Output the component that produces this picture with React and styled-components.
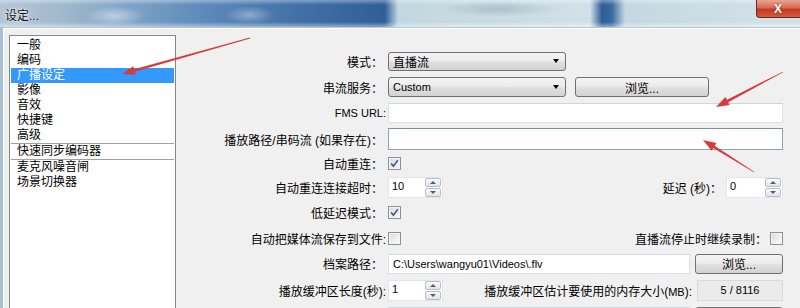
import React from "react";
import styled, { createGlobalStyle } from "styled-components";

const GlobalStyle = createGlobalStyle`
  html, body { margin: 0; padding: 0; background: #f0f0f0; }
  body {
    font-family: "Liberation Sans", "Noto Sans CJK SC", sans-serif;
    font-size: 12px;
    color: #000;
  }
  * { box-sizing: border-box; }
`;

const Window = styled.div`
  position: relative;
  width: 800px;
  height: 308px;
  overflow: hidden;
  display: flex;
  flex-direction: column;
  background: #f0f0f0;
`;

const TitleBar = styled.div`
  height: 27px;
  flex: none;
  display: flex;
  align-items: flex-start;
  background:
    radial-gradient(ellipse 30px 10px at 115px 16px, rgba(255,255,255,0.45), rgba(255,255,255,0)),
    radial-gradient(ellipse 25px 9px at 250px 15px, rgba(255,255,255,0.35), rgba(255,255,255,0)),
    radial-gradient(ellipse 60px 8px at 500px 9px, rgba(120,140,160,0.35), rgba(120,140,160,0)),
    linear-gradient(180deg, rgba(255,255,255,0.35) 0px, rgba(255,255,255,0) 5px, rgba(255,255,255,0) 22px, rgba(255,255,255,0.45) 27px),
    linear-gradient(90deg, #b3c6d6 0px, #a1b9ce 60px, #7ea3c6 130px, #5e8bbb 200px, #426fa6 300px, #2f5f98 385px, #c2d7df 398px, #d0e1e7 590px, #2f5c95 602px, #3a6aa0 612px, #c4d8e1 625px, #cfe0e7 757px);
`;

const TitleText = styled.div`
  padding: 6px 0 0 5px;
  font-size: 12px;
  color: #111;
  text-shadow: 0 0 5px rgba(255,255,255,0.9), 0 0 2px rgba(255,255,255,0.9);
`;

const CloseButton = styled.div`
  margin-left: auto;
  margin-right: -4px;
  width: 48px;
  height: 18px;
  border: 1px solid #6a2a1f;
  border-top: none;
  border-radius: 0 0 4px 4px;
  background: linear-gradient(180deg, #e7a597 0%, #d86a55 45%, #c43a20 55%, #d25a3c 100%);
  color: #fff;
  font-weight: bold;
  font-size: 12px;
  display: flex;
  align-items: center;
  justify-content: center;
  padding-right: 4px;
  text-shadow: 0 0 2px #6a2a1f;
`;

const Body = styled.div`
  flex: 1;
  display: flex;
  align-items: flex-start;
  border-left: 3px solid #a9bfd2;
  border-top: 1px solid #b9c6d2;
  box-shadow: inset 1px 1px 0 #ffffff;
`;

const ListPanel = styled.div`
  flex: none;
  margin: 7px 0 0 6px;
  width: 167px;
  height: 300px;
  background: #fff;
  border: 1px solid #828790;
  padding: 2px 1px;
`;

const ListItem = styled.div`
  height: 15px;
  line-height: 15px;
  padding-left: 6px;
  white-space: nowrap;
  background: ${p => (p.$selected ? "#3399ff" : "transparent")};
  color: ${p => (p.$selected ? "#fff" : "#000")};
`;

const ListSep = styled.div`
  height: 1px;
  background: #a0a0a0;
`;

const Form = styled.div`
  flex: 1;
  display: grid;
  grid-template-columns: 1fr 395px;
  grid-template-rows: 26px 26px 26px 26px 23px 25px 25px 26px 25px 28px 26px;
  column-gap: 5px;
  align-items: center;
  padding: 20px 17px 0 0;
`;

const Label = styled.div`
  justify-self: end;
  white-space: nowrap;
  margin-right: ${p => (p.$tight ? "-3px" : "0")};
`;

const Controls = styled.div`
  display: flex;
  align-items: center;
  min-width: 0;
`;

const Spacer = styled.div`
  flex: 1;
`;

const InlineLabel = styled.div`
  white-space: nowrap;
  margin-right: ${p => p.$gap ?? 6}px;
`;

const Latin = styled.span`
  font-size: 11px;
  font-family: "Liberation Sans", sans-serif;
`;

const winGradient = `linear-gradient(180deg, #f4f4f4 0%, #ececec 45%, #dfdfdf 55%, #d3d3d3 100%)`;

const Select = styled.div`
  width: 178px;
  height: ${p => p.$h}px;
  border: 1px solid #707070;
  border-radius: 3px;
  background: ${winGradient};
  display: flex;
  align-items: center;
  padding: 0 6px 0 4px;
  white-space: nowrap;
`;

const Caret = styled.div`
  margin-left: auto;
  width: 0;
  height: 0;
  border-left: 3.5px solid transparent;
  border-right: 3.5px solid transparent;
  border-top: 4px solid #000;
`;

const Button = styled.div`
  flex: none;
  width: ${p => p.$w}px;
  height: 20px;
  margin-left: ${p => p.$ml}px;
  border: 1px solid #707070;
  border-radius: 3px;
  background: ${winGradient};
  display: flex;
  align-items: center;
  justify-content: center;
  white-space: nowrap;
`;

const TextInput = styled.div`
  flex: none;
  width: ${p => (p.$w ? `${p.$w}px` : "100%")};
  height: ${p => p.$h || 20}px;
  background: #fff;
  border: 1px solid ${p => (p.$focus ? "#8ea3b8" : "#dde1e7")};
  border-top-color: ${p => (p.$focus ? "#7890a8" : "#cfd5dc")};
  display: flex;
  align-items: center;
  padding-left: 4px;
  white-space: nowrap;
  overflow: hidden;
`;

const SpinBox = styled.div`
  flex: none;
  display: flex;
  width: ${p => p.$w}px;
  height: 21px;
  background: #fff;
  border: 1px solid #e2e5ea;
`;

const SpinValue = styled.div`
  flex: 1;
  padding: 2px 0 0 3px;
  font-size: 11px;
  line-height: 12px;
`;

const SpinButtons = styled.div`
  width: 17px;
  display: flex;
  flex-direction: column;
  gap: 1px;
  padding: 0 1px 0 0;
`;

const SpinBtn = styled.div`
  flex: 1;
  border: 1px solid #b8bec6;
  border-radius: 2px;
  background: linear-gradient(180deg, #fafafa, #e2e4e6);
  display: flex;
  align-items: center;
  justify-content: center;
`;

const Tri = styled.div`
  width: 0;
  height: 0;
  border-left: 3px solid transparent;
  border-right: 3px solid transparent;
  ${p => (p.$down ? "border-top: 3px solid #4b5f86;" : "border-bottom: 3px solid #4b5f86;")}
`;

const CheckBoxBox = styled.div`
  flex: none;
  width: 13px;
  height: 13px;
  border: 1px solid #8e8f8f;
  background: linear-gradient(135deg, #d6d8da 0%, #eef0f2 60%, #fbfbfb 100%);
  box-shadow: inset 0 0 0 1px #f4f4f4;
  display: flex;
  align-items: center;
  justify-content: center;
`;

const StaticBox = styled.div`
  flex: none;
  width: 86px;
  height: 21px;
  border: 1px solid #dadada;
  background: #ebebeb;
  display: flex;
  align-items: center;
  justify-content: center;
  font-size: 11px;
`;

const Overlay = styled.svg`
  position: absolute;
  left: 0;
  top: 0;
  pointer-events: none;
`;

function CheckBox({ checked }) {
  return (
    <CheckBoxBox>
      {checked && (
        <svg width="9" height="9" viewBox="0 0 9 9">
          <path d="M1.2 4.6 L3.4 7.2 L7.8 1.2" fill="none" stroke="#3f568c" strokeWidth="1.6" />
        </svg>
      )}
    </CheckBoxBox>
  );
}

function Spin({ value, w = 55 }) {
  return (
    <SpinBox $w={w}>
      <SpinValue>{value}</SpinValue>
      <SpinButtons>
        <SpinBtn><Tri /></SpinBtn>
        <SpinBtn><Tri $down /></SpinBtn>
      </SpinButtons>
    </SpinBox>
  );
}

function Arrow({ x1, y1, x2, y2 }) {
  const dx = x2 - x1;
  const dy = y2 - y1;
  const d = Math.hypot(dx, dy);
  const ux = dx / d;
  const uy = dy / d;
  const px = -uy;
  const py = ux;
  const len = 13;
  const hw = 4.5;
  const bx = x2 - ux * len;
  const by = y2 - uy * len;
  const head = `${x2},${y2} ${bx + px * hw},${by + py * hw} ${bx - px * hw},${by - py * hw}`;
  const tw = 0.4;
  const sw = 1.4;
  const shaft = `${x1 + px * tw},${y1 + py * tw} ${bx + ux * 2 + px * sw},${by + uy * 2 + py * sw} ${bx + ux * 2 - px * sw},${by + uy * 2 - py * sw} ${x1 - px * tw},${y1 - py * tw}`;
  return (
    <g fill="#d93a3a">
      <polygon points={shaft} />
      <polygon points={head} />
    </g>
  );
}

const listItems = [
  { t: "一般" },
  { t: "编码" },
  { t: "广播设定", sel: true },
  { t: "影像" },
  { t: "音效" },
  { t: "快捷键" },
  { t: "高级", sep: true },
  { t: "快速同步编码器", sep: true },
  { t: "麦克风噪音闸" },
  { t: "场景切换器" },
];

export default function App() {
  return (
    <>
      <GlobalStyle />
      <Window>
        <TitleBar>
          <TitleText>设定...</TitleText>
          <CloseButton>X</CloseButton>
        </TitleBar>
        <Body>
          <ListPanel>
            {listItems.map(it => (
              <React.Fragment key={it.t}>
                <ListItem $selected={it.sel}>{it.t}</ListItem>
                {it.sep && <ListSep />}
              </React.Fragment>
            ))}
          </ListPanel>
          <Form>
            <Label>模式：</Label>
            <Controls>
              <Select $h={19}>直播流<Caret /></Select>
            </Controls>

            <Label>串流服务：</Label>
            <Controls>
              <Select $h={20}><Latin>Custom</Latin><Caret /></Select>
              <Button $w={134} $ml={9}>浏览...</Button>
            </Controls>

            <Label $tight><Latin>FMS URL:</Latin></Label>
            <Controls>
              <TextInput $h={20} />
            </Controls>

            <Label>播放路径/串码流 (如果存在)：</Label>
            <Controls>
              <TextInput $h={22} $focus />
            </Controls>

            <Label>自动重连：</Label>
            <Controls>
              <CheckBox checked />
            </Controls>

            <Label>自动重连连接超时：</Label>
            <Controls>
              <Spin value="10" />
              <Spacer />
              <InlineLabel $gap={4}>延迟 (秒)：</InlineLabel>
              <Spin value="0" w={57} />
            </Controls>

            <Label>低延迟模式：</Label>
            <Controls>
              <CheckBox checked />
            </Controls>

            <Label $tight>自动把媒体流保存到文件:</Label>
            <Controls>
              <CheckBox />
              <Spacer />
              <InlineLabel $gap={3}>直播流停止时继续录制：</InlineLabel>
              <CheckBox />
            </Controls>

            <Label>档案路径：</Label>
            <Controls>
              <TextInput $w={302} $h={20}><Latin>C:\Users\wangyu01\Videos\.flv</Latin></TextInput>
              <Button $w={88} $ml={5}>浏览...</Button>
            </Controls>

            <Label $tight>播放缓冲区长度(秒):</Label>
            <Controls>
              <Spin value="1" />
              <Spacer />
              <InlineLabel $gap={5}>播放缓冲区估计要使用的内存大小(<Latin>MB</Latin>):</InlineLabel>
              <StaticBox>5 / 8116</StaticBox>
            </Controls>

            <Label />
            <Controls>
              <TextInput $w={302} $h={20} />
              <Button $w={88} $ml={5} />
            </Controls>
          </Form>
        </Body>
        <Overlay width="800" height="308" viewBox="0 0 800 308">
          <Arrow x1={250} y1={38} x2={122} y2={74} />
          <Arrow x1={783} y1={72} x2={716} y2={107} />
          <Arrow x1={754} y1={172} x2={703} y2={140} />
        </Overlay>
      </Window>
    </>
  );
}
